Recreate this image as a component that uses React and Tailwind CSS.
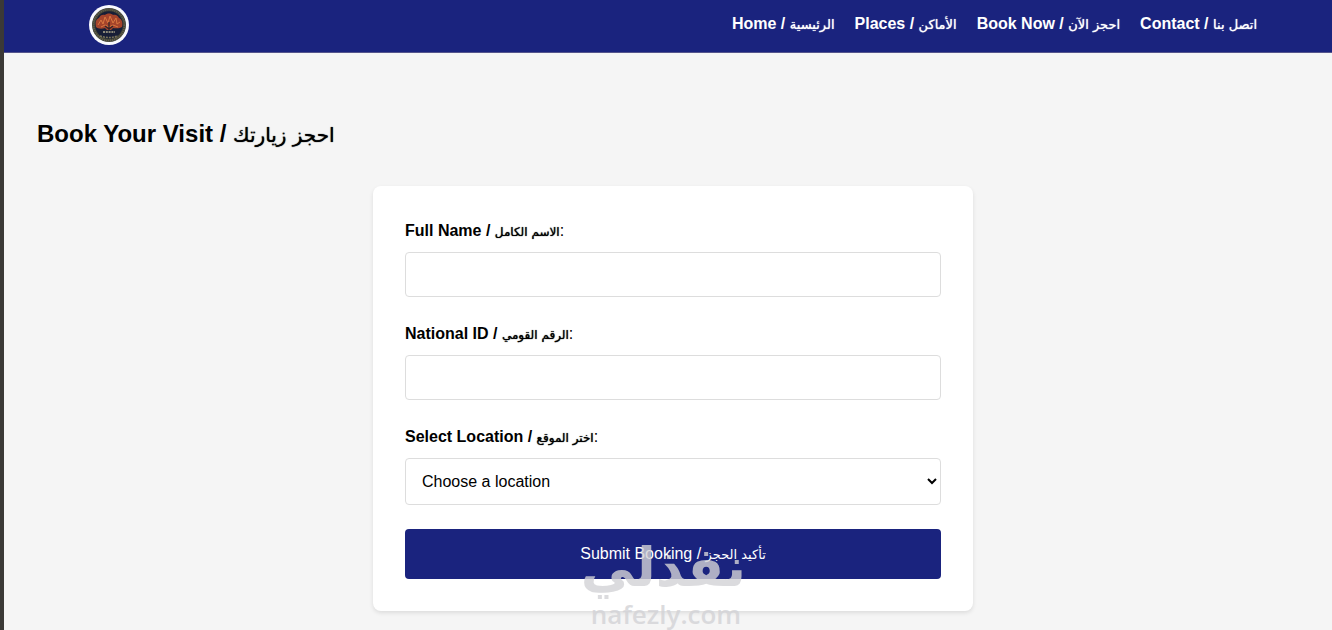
import React from "react";

const links = [
  { href: "#home", en: "Home", ar: "الرئيسية" },
  { href: "#places", en: "Places", ar: "الأماكن" },
  { href: "#book", en: "Book Now", ar: "احجز الآن" },
  { href: "#contact", en: "Contact", ar: "اتصل بنا" },
];

const fields = [
  { id: "full-name", en: "Full Name", ar: "الاسم الكامل" },
  { id: "national-id", en: "National ID", ar: "الرقم القومي" },
];

function Arabic({ children, className = "text-[13px]" }) {
  return (
    <bdi lang="ar" className={`font-['DejaVu_Sans',sans-serif] font-normal ${className}`}>
      {children}
    </bdi>
  );
}

function Emblem() {
  return (
    <svg viewBox="0 0 40 40" className="size-10" role="img" aria-label="Emblem">
      <circle cx="20" cy="20" r="20" fill="#fafaff" />
      <circle cx="20" cy="20" r="17" fill="#3d4036" />
      <circle cx="20" cy="20" r="15.5" fill="none" stroke="#625e4c" strokeWidth="2" strokeDasharray="1.2 0.8" />
      <circle cx="20" cy="20" r="13.8" fill="#171e36" />
      <path d="M7 22c-1-5 0-8 3-9 1-3 4-4 6-3 2-2 6-2 8 0 3-1 5 1 6 3 3 1 4 5 3 9-3 2-7 1-9 1l-2 2h-4l-2-2c-3 1-7 1-9-1z" fill="#a5442b" />
      <path d="M9 20l3-5 2 4 2-7 3 6 2-7 3 7 3-5 1 6 3-2M12 22l4-2 4 2 4-2 5 2" fill="none" stroke="#d97840" strokeWidth="1" />
      <path d="M20 17v8M16 21l4 3 4-3" fill="none" stroke="#302329" strokeWidth="1.2" />
      <path d="M14 27h12" stroke="#8c8979" strokeWidth="1.8" strokeDasharray="2 0.8" />
      <path d="M11 31q9 3 18 0" fill="none" stroke="#7b755b" strokeWidth="1.6" strokeDasharray="2 1" />
    </svg>
  );
}

function Field({ id, en, ar, children }) {
  return (
    <div>
      <label htmlFor={id} className="mb-2 block h-[26px] text-base leading-[26px] font-bold">
        {en} / <Arabic className="text-[12px] [text-shadow:0_0_1px_currentColor]">{ar}</Arabic>
        <span className="font-normal">:</span>
      </label>
      {children}
    </div>
  );
}

export default function App() {
  return (
    <div className="relative min-h-screen overflow-hidden border-l-4 border-[#3b3936] bg-[#f5f5f5] font-['Liberation_Sans','DejaVu_Sans',sans-serif] text-black">
      <header className="border-b border-[#55558c] bg-[#1a237e] pr-[75px] pl-[85px] text-white">
        <div className="flex h-[52px] items-center justify-between pb-[3px]">
          <a href="#home"><Emblem /></a>
          <nav className="flex gap-5">
            {links.map((l) => (
              <a key={l.href} href={l.href} className="text-base leading-6 font-bold whitespace-nowrap">
                {l.en} / <Arabic className="text-[13px] [text-shadow:0_0_1px_currentColor]">{l.ar}</Arabic>
              </a>
            ))}
          </nav>
        </div>
      </header>

      <main className="pt-[63px] pr-[23px] pb-5 pl-[33px]">
        <h1 className="mb-[34px] text-2xl leading-9 font-bold">
          Book Your Visit / <Arabic className="text-xl [text-shadow:0_0_1px_currentColor]">احجز زيارتك</Arabic>
        </h1>
        <form
          onSubmit={(e) => e.preventDefault()}
          className="mx-auto flex max-w-[600px] flex-col gap-6 rounded-lg bg-white p-8 shadow-[0_2px_4px_rgba(0,0,0,0.1)]"
        >
          {fields.map((f) => (
            <Field key={f.id} {...f}>
              <input id={f.id} type="text" className="block h-[45px] w-full rounded border border-[#dddddd] bg-white px-3 text-base" />
            </Field>
          ))}
          <Field id="location" en="Select Location" ar="اختر الموقع">
            <select id="location" className="block h-[47px] w-full rounded border border-[#dddddd] bg-white px-3 text-base text-black">
              <option>Choose a location</option>
            </select>
          </Field>
          <button type="submit" className="h-[50px] rounded bg-[#1a237e] text-base text-white">
            Submit Booking / <Arabic>تأكيد الحجز</Arabic>
          </button>
        </form>
      </main>

      <div className="pointer-events-none absolute top-[538px] left-[582px] w-[160px] text-center text-[#d3d3d6] opacity-80">
        <p lang="ar" dir="rtl" className="font-['DejaVu_Sans',sans-serif] text-[54px] leading-[60px] font-bold whitespace-nowrap">
          نفذلي
        </p>
        <p className="font-['Open_Sans',sans-serif] text-[26px] leading-8 font-semibold">nafezly.com</p>
      </div>
    </div>
  );
}
